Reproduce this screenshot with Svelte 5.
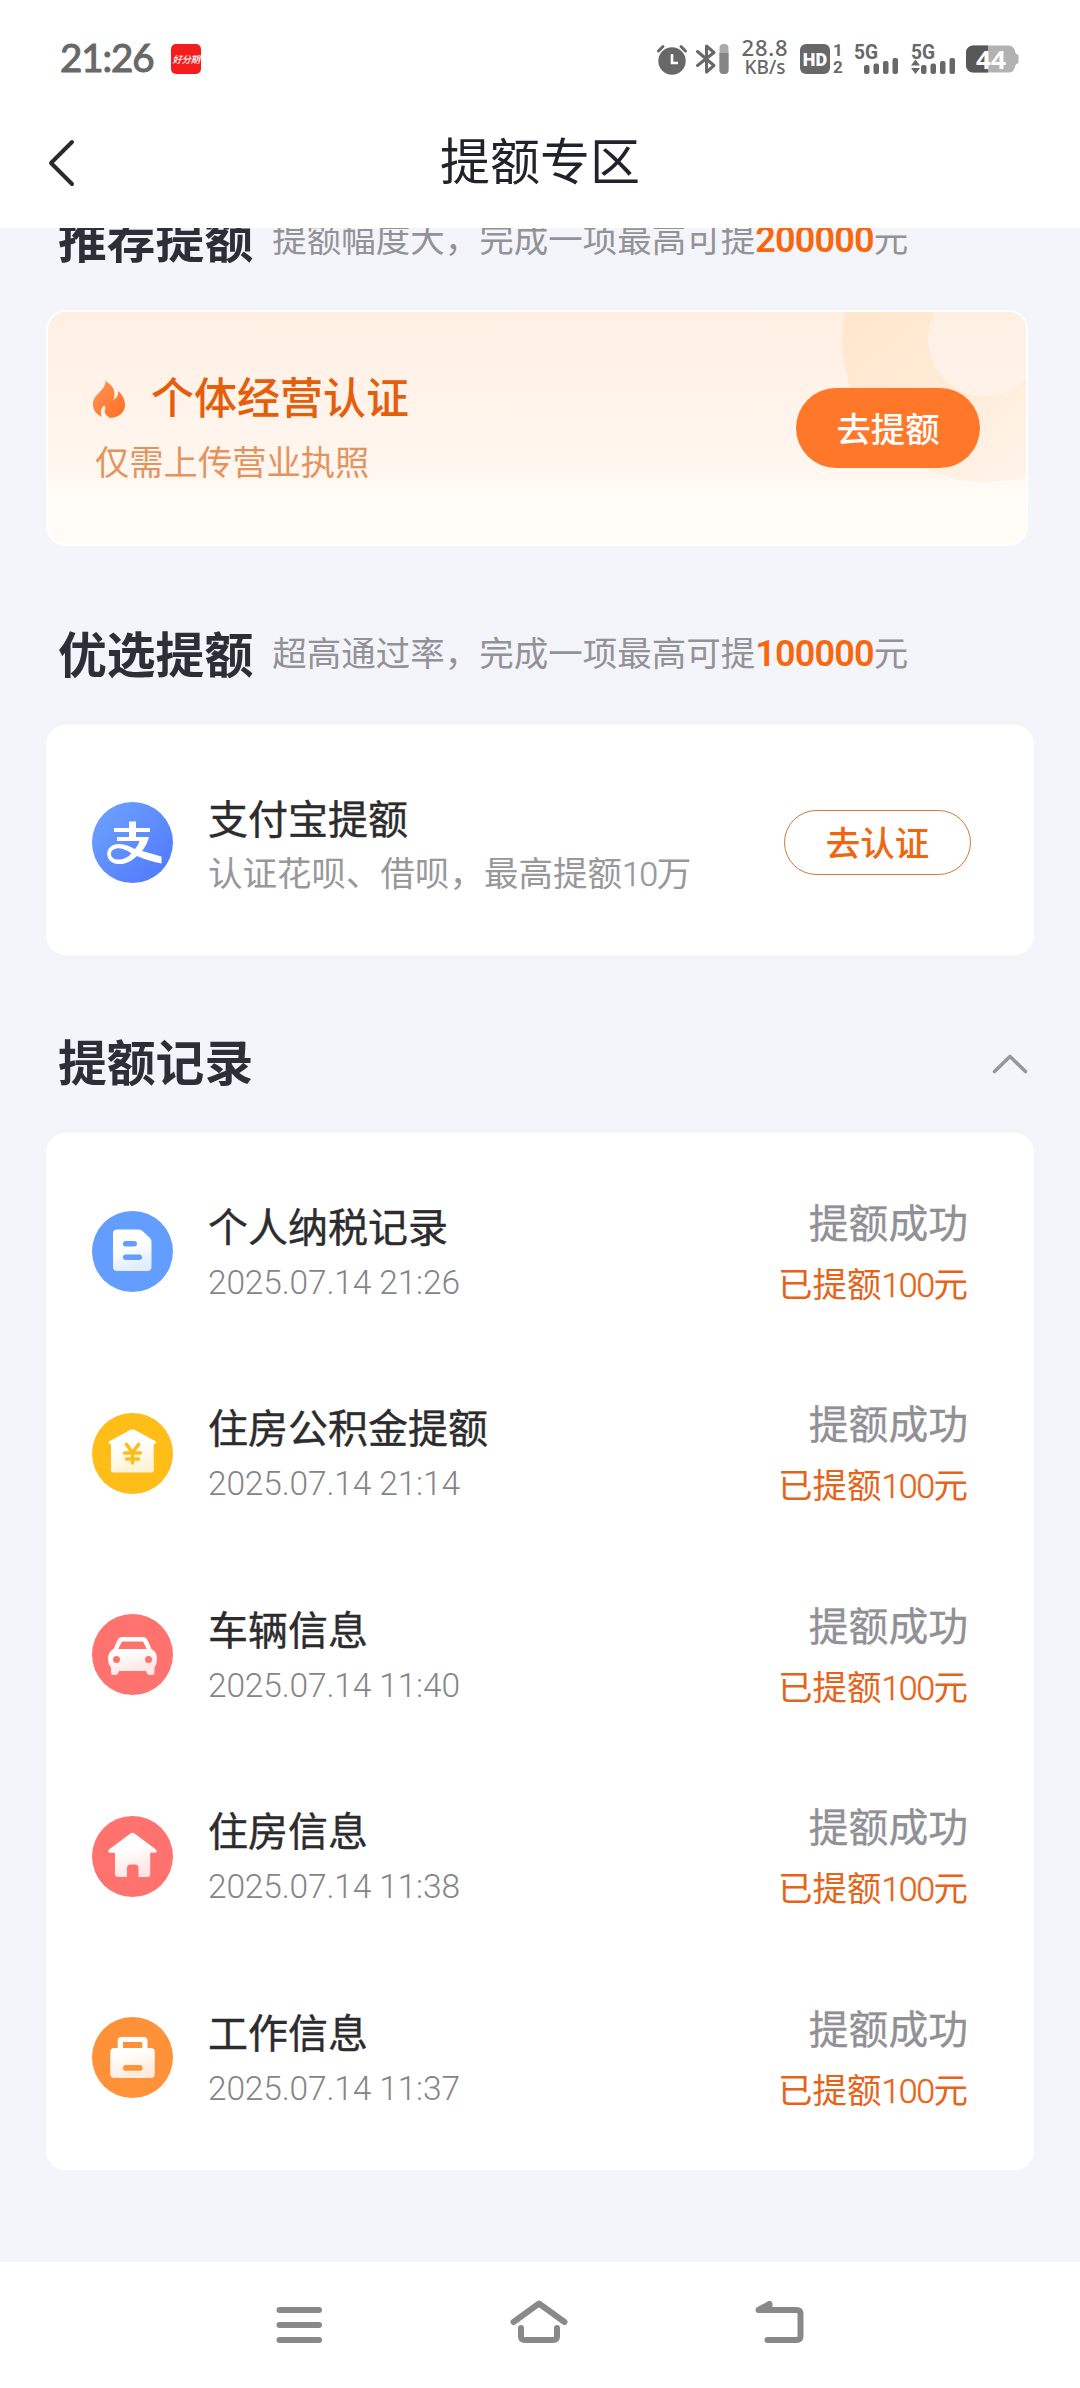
<script lang="ts">
  type RecordItem = {
    icon: 'tax' | 'fund' | 'car' | 'house' | 'work';
    name: string;
    time: string;
    amount: number;
  };

  const records: RecordItem[] = [
    { icon: 'tax', name: '个人纳税记录', time: '2025.07.14 21:26', amount: 100 },
    { icon: 'fund', name: '住房公积金提额', time: '2025.07.14 21:14', amount: 100 },
    { icon: 'car', name: '车辆信息', time: '2025.07.14 11:40', amount: 100 },
    { icon: 'house', name: '住房信息', time: '2025.07.14 11:38', amount: 100 },
    { icon: 'work', name: '工作信息', time: '2025.07.14 11:37', amount: 100 }
  ];

  let expanded = $state(true);

  function toggleRecords() {
    expanded = !expanded;
  }
</script>

<div class="page">
  <div class="status-bar">
    <span class="clock">21:26</span>
    <span class="app-badge"><span>好分期</span></span>
    <div class="status-right">
      <!-- alarm -->
      <svg class="alarm" width="30" height="32" viewBox="0 0 30 32">
        <circle cx="15" cy="18" r="13.7" fill="#686868" />
        <path d="M1.5 8L6 3.5M28.5 8L24 3.5" stroke="#686868" stroke-width="3" stroke-linecap="round" />
        <path d="M15 11v9h6" fill="none" stroke="#fff" stroke-width="2.6" />
      </svg>
      <!-- bluetooth with device battery -->
      <svg class="bluetooth" width="34" height="32" viewBox="0 0 34 32">
        <path d="M2.500 8.500L19 22.500L11.500 29V3L19 9.500L2.500 22.500" fill="none" stroke="#686868" stroke-width="3" stroke-linecap="round" stroke-linejoin="round" />
        <rect x="24.500" y="1" width="9" height="30" rx="4" fill="#ababab" />
        <path d="M24.500 10h9v17a4 4 0 0 1-4 4h-1a4 4 0 0 1-4-4z" fill="#858585" />
      </svg>
      <div class="speed">
        <span class="speed-value">28.8</span>
        <span class="speed-unit">KB/s</span>
      </div>
      <span class="hd">HD</span>
      <span class="sims"><span>1</span><span>2</span></span>
      <svg class="signal" width="46" height="32" viewBox="0 0 46 32">
        <text x="0" y="16" class="net" textLength="24" lengthAdjust="spacingAndGlyphs">5G</text>
        <g fill="#686868">
          <rect x="10" y="22" width="5.500" height="9" rx="2" />
          <rect x="19.500" y="20.500" width="5.500" height="10.500" rx="2" />
          <rect x="29" y="18" width="5.500" height="13" rx="2" />
          <rect x="38.500" y="15" width="5.500" height="16" rx="2" />
        </g>
      </svg>
      <svg class="signal second" width="46" height="32" viewBox="0 0 46 32">
        <text x="0" y="16" class="net" textLength="24" lengthAdjust="spacingAndGlyphs">5G</text>
        <g fill="#686868">
          <path d="M0 22.500L4.500 16.500L9 22.500zM0 25L4.500 31L9 25z" />
          <rect x="10" y="22" width="5.500" height="9" rx="2" />
          <rect x="19.500" y="20.500" width="5.500" height="10.500" rx="2" />
          <rect x="29" y="18" width="5.500" height="13" rx="2" />
          <rect x="38.500" y="15" width="5.500" height="16" rx="2" />
        </g>
      </svg>
      <svg class="battery" width="54" height="28" viewBox="0 0 54 28">
        <path d="M7 .5H42a7 7 0 0 1 7 5.500q0 3 3.500 4v8q-3.500 1-3.500 4a7 7 0 0 1-7 5.500H7a7 7 0 0 1-7-7V7.500a7 7 0 0 1 7-7z" fill="#b2b2b2" />
        <path d="M7 .5H22v27H7a7 7 0 0 1-7-7V7.500a7 7 0 0 1 7-7z" fill="#585858" />
        <text x="10" y="23.500" class="percent" textLength="30" lengthAdjust="spacingAndGlyphs">44</text>
      </svg>
    </div>
  </div>

  <header class="nav">
    <button class="back" aria-label="返回">
      <svg width="28" height="50" viewBox="0 0 28 50">
        <path d="M25 4L4 25L25 46" fill="none" stroke="#2a2a2c" stroke-width="4" stroke-linecap="round" stroke-linejoin="round" />
      </svg>
    </button>
    <h1>提额专区</h1>
  </header>

  <main class="content">
    <section class="section recommend">
      <div class="section-head">
        <h2>推荐提额</h2>
        <p>提额幅度大，完成一项最高可提<b>200000</b>元</p>
      </div>
      <div class="promo-card">
        <!-- corner rings -->
        <svg class="rings" width="186" height="172" viewBox="0 0 186 172">
          <defs>
            <linearGradient id="ring" gradientUnits="userSpaceOnUse" x1="20" y1="0" x2="160" y2="172">
              <stop offset="0" stop-color="#ffe7cd" />
              <stop offset="0.45" stop-color="#ffead5" />
              <stop offset="1" stop-color="#fff3e8" />
            </linearGradient>
            <linearGradient id="ring-inner" gradientUnits="userSpaceOnUse" x1="0" y1="0" x2="0" y2="172">
              <stop offset="0" stop-color="#ffefe3" />
              <stop offset="1" stop-color="#fff7f0" />
            </linearGradient>
          </defs>
          <circle cx="145" cy="27" r="143" fill="url(#ring)" />
          <circle cx="145" cy="27" r="57" fill="url(#ring-inner)" />
        </svg>
        <div class="promo-info">
          <div class="promo-title">
            <svg width="34" height="38" viewBox="0 0 34 38">
              <defs>
                <linearGradient id="flame" x1="0" y1="0" x2="1" y2="1">
                  <stop offset="0" stop-color="#ff9457" />
                  <stop offset="1" stop-color="#ff6f22" />
                </linearGradient>
              </defs>
              <path d="M13.500 1C22 6 24 12 21.500 20C25 18 26.500 15 26 11C31 15 33 20 33 25C33 32 27 37.500 18.500 38C14.500 36 12 33.500 13 30C13.500 28.500 13.500 27 12.500 25.500C9 27.500 8 32 10 37C4 34 1 30 1 24C1 14 13.500 11 13.500 1z" fill="url(#flame)" />
            </svg>
            <span>个体经营认证</span>
          </div>
          <p>仅需上传营业执照</p>
        </div>
        <button class="btn-solid">去提额</button>
      </div>
    </section>

    <section class="section">
      <div class="section-head">
        <h2>优选提额</h2>
        <p>超高通过率，完成一项最高可提<b>100000</b>元</p>
      </div>
      <div class="card alipay">
        <svg class="icon" width="81" height="81" viewBox="0 0 81 81">
          <defs>
            <linearGradient id="ali" x1="0" y1="0" x2="1" y2="1">
              <stop offset="0" stop-color="#6fa4ff" />
              <stop offset="1" stop-color="#4f76fb" />
            </linearGradient>
          </defs>
          <circle cx="40.500" cy="40.500" r="40.500" fill="url(#ali)" />
          <path d="M37 19.500h7V26H58V30H44V35H57C55 42 52.500 46 50 49L69.500 54.500V61.500C60 60 52 57 45 54C38 60.500 32 62.500 26 62C19 61.500 15.200 57 15.200 52C15.200 46 20 42 27 42C33 42 38 44.500 43 47C45 44.500 46.500 42 47.500 39H25V35H37V30H22V26H37zM39.500 51.500C35 48.500 31 46.300 27 46.300C22 46.300 19 48.500 19 52C19 55.500 22 57.500 26.500 57.500C31.500 57.500 35.500 55.500 39.500 51.500z" fill="#fff" fill-rule="evenodd" />
        </svg>
        <div class="info">
          <h3>支付宝提额</h3>
          <p>认证花呗、借呗，最高提额<i>10</i>万</p>
        </div>
        <button class="btn-outline">去认证</button>
      </div>
    </section>

    <section class="section">
      <div class="section-head">
        <h2>提额记录</h2>
        <button class="toggle" class:collapsed={!expanded} aria-label="展开或收起" onclick={toggleRecords}>
          <svg width="36" height="22" viewBox="0 0 36 22">
            <path d="M2.500 18.500L18 3.500L33.500 18.500" fill="none" stroke="#98989c" stroke-width="3.600" stroke-linecap="round" stroke-linejoin="round" />
          </svg>
        </button>
      </div>
      {#if expanded}
        <ul class="card records">
          {#each records as item}
            <li>
              <svg class="icon {item.icon}" width="81" height="81" viewBox="0 0 81 81">
                <defs>
                  <linearGradient id="fade-{item.icon}" x1="0" y1="0" x2="0.3" y2="1">
                    <stop offset="0.45" stop-color="#fff" />
                    <stop offset="1" stop-color="#fff" stop-opacity="0.82" />
                  </linearGradient>
                </defs>
                <circle cx="40.500" cy="40.500" r="40.500" fill="currentColor" />
                <g fill="url(#fade-{item.icon})" fill-rule="evenodd">
                  {#if item.icon === 'tax'}
                    <path d="M25 18.500H47Q49 18.500 51 20.500L57.500 26.500Q59.500 28 59.500 31V55.500Q59.500 60 55 60H25.500Q21 60 21 55.500V22.500Q21 18.500 25 18.500z" />
                    <rect class="cut" x="31" y="30" width="14" height="5.500" rx="2.700" />
                    <rect class="cut" x="31" y="43.500" width="19" height="5.500" rx="2.700" />
                  {:else if item.icon === 'fund'}
                    <path d="M38.500 16.800Q40.500 15.500 42.500 16.800L64 28.500Q65 31 61.800 31V57Q61.800 59.500 59.500 59.500H21.500Q19 59.500 19 57V31Q15.500 31 17 28.500z" />
                    <path class="mark" d="M34.500 31.500L40.500 39.500L46.500 31.500M32.500 40H48.500M34.500 46H46.500M40.500 40V50" />
                  {:else if item.icon === 'car'}
                    <path d="M29.500 23H51Q54 23 55.500 26L59.500 35Q65 38 65 44.500Q65 50 62.500 53.500V58.500Q62.500 61 60 61H57.500Q55 61 54 57H27Q26 61 23.500 61H21.500Q19 61 19 58.500V53.500Q16 50 16 44.500Q16 38 21.500 35L25.500 26Q27 23 29.500 23zM30 27.500L26.200 35H54.800L51 27.500z" />
                    <circle class="cut" cx="24.500" cy="45.500" r="3.500" />
                    <circle class="cut" cx="56.500" cy="45.500" r="3.500" />
                  {:else if item.icon === 'house'}
                    <path d="M38.500 17.500Q40.500 16 42.500 17.500L64 33.500Q66 36.800 62.500 36.800H58.200V58Q58.200 61 55.500 61H46.500V52Q46.500 48.500 43 48.500H38.500Q35 48.500 35 52V61H26Q23 61 23 58V36.800H18.500Q15 36.800 17 33.500z" />
                  {:else}
                    <path d="M29.500 20H51.500Q55.500 20 55.500 24V31H58.500Q62.800 31 62.800 35V57Q62.800 61 58.500 61H22.500Q18.300 61 18.300 57V35Q18.300 31 22.500 31H25.700V24Q25.700 20 29.500 20zM31 25V31H50.200V25z" />
                    <rect class="cut" x="31" y="48" width="19.500" height="5.800" rx="2.900" />
                  {/if}
                </g>
              </svg>
              <div class="info">
                <h3>{item.name}</h3>
                <time>{item.time}</time>
              </div>
              <div class="result">
                <span class="state">提额成功</span>
                <span class="amount">已提额<i>{item.amount}</i>元</span>
              </div>
            </li>
          {/each}
        </ul>
      {/if}
    </section>
  </main>

  <nav class="system-nav">
    <svg width="52" height="50" viewBox="0 0 52 50">
      <path d="M6.500 10H46M6.500 25H46M6.500 40H46" />
    </svg>
    <svg width="62" height="50" viewBox="0 0 62 50">
      <path d="M5.500 22L31 3.500L56.500 22M13 28V36.500Q13 40 17 40H45Q49 40 49 36.500V28" />
    </svg>
    <svg width="54" height="50" viewBox="0 0 54 50">
      <path d="M14.500 40H43.500Q47.500 40 47.500 36V14Q47.500 10 43.500 10H5.500L16.500 4V8" />
    </svg>
  </nav>
</div>

<style>
  :global(body) {
    margin: 0;
    background: #f4f5fa;
  }

  .page {
    width: 1080px;
    height: 2388px;
    display: flex;
    flex-direction: column;
    overflow: hidden;
    background: #f4f5fa;
    color: #2c2c2e;
    font-family: Roboto, 'Noto Sans CJK SC', sans-serif;
  }

  h1,
  h2,
  h3,
  p,
  ul {
    margin: 0;
    padding: 0;
    font-weight: 400;
  }

  svg {
    display: block;
    flex-shrink: 0;
    overflow: visible;
  }

  button {
    padding: 0;
    border: none;
    background: none;
    font-family: inherit;
    cursor: pointer;
  }

  /* status bar */
  .status-bar {
    height: 118px;
    box-sizing: border-box;
    padding: 0 60px;
    display: flex;
    align-items: center;
    background: #fff;
    color: #686868;
    flex-shrink: 0;
  }

  .clock {
    width: 111px;
    padding-bottom: 4px;
    font-family: Lato, sans-serif;
    font-size: 38.500px;
    font-weight: 400;
    line-height: 44px;
    letter-spacing: -1.100px;
    -webkit-text-stroke: 1.100px #686868;
  }

  .app-badge {
    width: 30px;
    height: 30px;
    border-radius: 5px;
    background: #f31d1d;
    display: flex;
    align-items: center;
    justify-content: center;
  }

  .app-badge span {
    color: #fff;
    font-size: 9.500px;
    font-style: italic;
    font-weight: 500;
    letter-spacing: -0.5px;
    white-space: nowrap;
  }

  .status-right {
    margin-left: auto;
    display: flex;
    align-items: center;
  }

  .bluetooth {
    margin-left: 8px;
  }

  .speed {
    width: 48px;
    margin-left: 12px;
    padding-bottom: 3px;
    display: flex;
    flex-direction: column;
    align-items: center;
    font-family: 'Noto Sans', sans-serif;
    font-weight: 500;
    white-space: nowrap;
  }

  .speed-value {
    font-size: 22px;
    line-height: 19px;
    letter-spacing: 0.8px;
  }

  .speed-unit {
    font-size: 19px;
    line-height: 20px;
  }

  .hd {
    width: 30px;
    height: 30px;
    margin-left: 11px;
    border-radius: 6px;
    background: #686868;
    color: #fff;
    font-size: 18px;
    font-weight: 900;
    line-height: 31px;
    text-align: center;
  }

  .sims {
    width: 12px;
    margin-left: 2px;
    display: flex;
    flex-direction: column;
    align-items: center;
    font-size: 17px;
    font-weight: 700;
    line-height: 17px;
  }

  .signal {
    margin-left: 10px;
  }

  .signal.second {
    margin-left: 11px;
  }

  .net {
    fill: #686868;
    font-family: Roboto, sans-serif;
    font-size: 20px;
    font-weight: 700;
  }

  .battery {
    margin-left: 9px;
  }

  .percent {
    fill: #fff;
    font-family: 'Open Sans', sans-serif;
    font-size: 25px;
    font-weight: 700;
  }

  /* title bar */
  .nav {
    height: 110px;
    padding: 0 47px 20px;
    display: grid;
    grid-template-columns: 1fr auto 1fr;
    align-items: center;
    box-sizing: border-box;
    background: #fff;
    flex-shrink: 0;
  }

  .nav h1 {
    font-size: 50px;
    line-height: 60px;
    color: #22222c;
  }

  .back {
    width: 28px;
  }

  /* scrolled content */
  .content {
    flex: 1;
    min-height: 0;
    overflow: hidden;
    padding: 0 46px;
  }

  .section {
    margin-bottom: 74.500px;
  }

  /* the list is scrolled a little, so the first heading is cut */
  .recommend {
    margin-top: -22px;
  }

  .section-head {
    height: 68px;
    padding: 0 6px 36px 12px;
    display: flex;
    align-items: center;
  }

  .section-head h2 {
    padding-top: 4px;
    font-size: 48.800px;
    font-weight: 700;
    line-height: 64px;
    color: #2e2e36;
  }

  .section-head p {
    margin-left: 19px;
    padding-bottom: 1px;
    font-size: 34.500px;
    line-height: 48px;
    color: #929297;
    white-space: nowrap;
  }

  .section-head b {
    font-size: 36px;
    font-weight: 600;
    letter-spacing: -0.8px;
    color: #f8660f;
  }

  .toggle {
    margin-left: auto;
    padding-top: 2px;
  }

  .toggle.collapsed svg {
    transform: rotate(180deg);
  }

  .promo-card {
    position: relative;
    width: 982px;
    height: 236px;
    box-sizing: border-box;
    padding: 0 46px;
    display: flex;
    justify-content: space-between;
    align-items: center;
    border: 2px solid #fff;
    border-radius: 20px;
    background: linear-gradient(#ffefe3, #fff7f0 168px, #fffaf4 168px, #fffcf8);
    overflow: hidden;
  }

  .rings {
    position: absolute;
    top: 0;
    right: 0;
  }

  .promo-info p {
    margin-top: 12px;
    padding-left: 1px;
    font-size: 34.300px;
    line-height: 46px;
    color: #e5935e;
  }

  .promo-title {
    display: flex;
    align-items: center;
    gap: 25px;
    margin-left: -2px;
    font-size: 43px;
    font-weight: 500;
    line-height: 58px;
    color: #e35f0b;
  }

  .btn-solid {
    position: relative;
    width: 184px;
    height: 80px;
    padding-bottom: 3px;
    border-radius: 40px;
    background: #ff782a;
    color: #fff;
    font-size: 34.300px;
    font-weight: 500;
  }

  .card {
    box-sizing: border-box;
    border-radius: 20px;
    background: #fff;
  }

  .alipay {
    height: 230px;
    padding: 5px 63px 0 46px;
    display: flex;
    align-items: center;
  }

  .info {
    margin-left: 35px;
    padding-top: 3px;
    display: flex;
    flex-direction: column;
    gap: 9px;
  }

  .info h3 {
    font-size: 40px;
    line-height: 50px;
    -webkit-text-stroke: 0.4px currentColor;
  }

  .alipay .info {
    padding-top: 6px;
    gap: 8px;
  }

  .info p {
    font-size: 34.500px;
    line-height: 40px;
    color: #98989c;
  }

  .info time {
    font-size: 33.500px;
    font-weight: 300;
    line-height: 40px;
    letter-spacing: -0.15px;
    color: #858589;
  }

  .btn-outline {
    width: 187px;
    height: 65px;
    margin-left: auto;
    padding-bottom: 3px;
    border: 1.500px solid #d0783f;
    border-radius: 33px;
    color: #f0650f;
    font-size: 34.500px;
    font-weight: 500;
  }

  .records {
    height: 1037px;
    padding-top: 18px;
    list-style: none;
  }

  .records li {
    height: 201.500px;
    padding: 0 66px 0 46px;
    display: flex;
    align-items: center;
  }

  .result {
    margin-left: auto;
    padding-top: 1px;
    display: flex;
    flex-direction: column;
    align-items: flex-end;
    gap: 15px;
  }

  .state {
    font-size: 39.800px;
    line-height: 50px;
    color: #909095;
    -webkit-text-stroke: 0.3px currentColor;
  }

  .amount {
    font-size: 34.500px;
    line-height: 40px;
    color: #e5641a;
  }

  i {
    font-size: 34px;
    font-style: normal;
    font-weight: 300;
    letter-spacing: -1.500px;
    -webkit-text-stroke: 0.4px currentColor;
  }

  .tax {
    color: #639dff;
  }

  .fund {
    color: #ffbd18;
  }

  .car,
  .house {
    color: #ff726d;
  }

  .work {
    color: #ff9239;
  }

  .cut {
    fill: currentColor;
  }

  .mark {
    fill: none;
    stroke: currentColor;
    stroke-width: 3.600px;
    stroke-linecap: round;
  }

  /* system navigation */
  .system-nav {
    height: 126px;
    padding: 0 273px;
    box-sizing: border-box;
    display: flex;
    justify-content: space-between;
    align-items: center;
    background: #fff;
    flex-shrink: 0;
  }

  .system-nav path {
    fill: none;
    stroke: #898989;
    stroke-width: 6px;
    stroke-linecap: round;
    stroke-linejoin: round;
  }
</style>
